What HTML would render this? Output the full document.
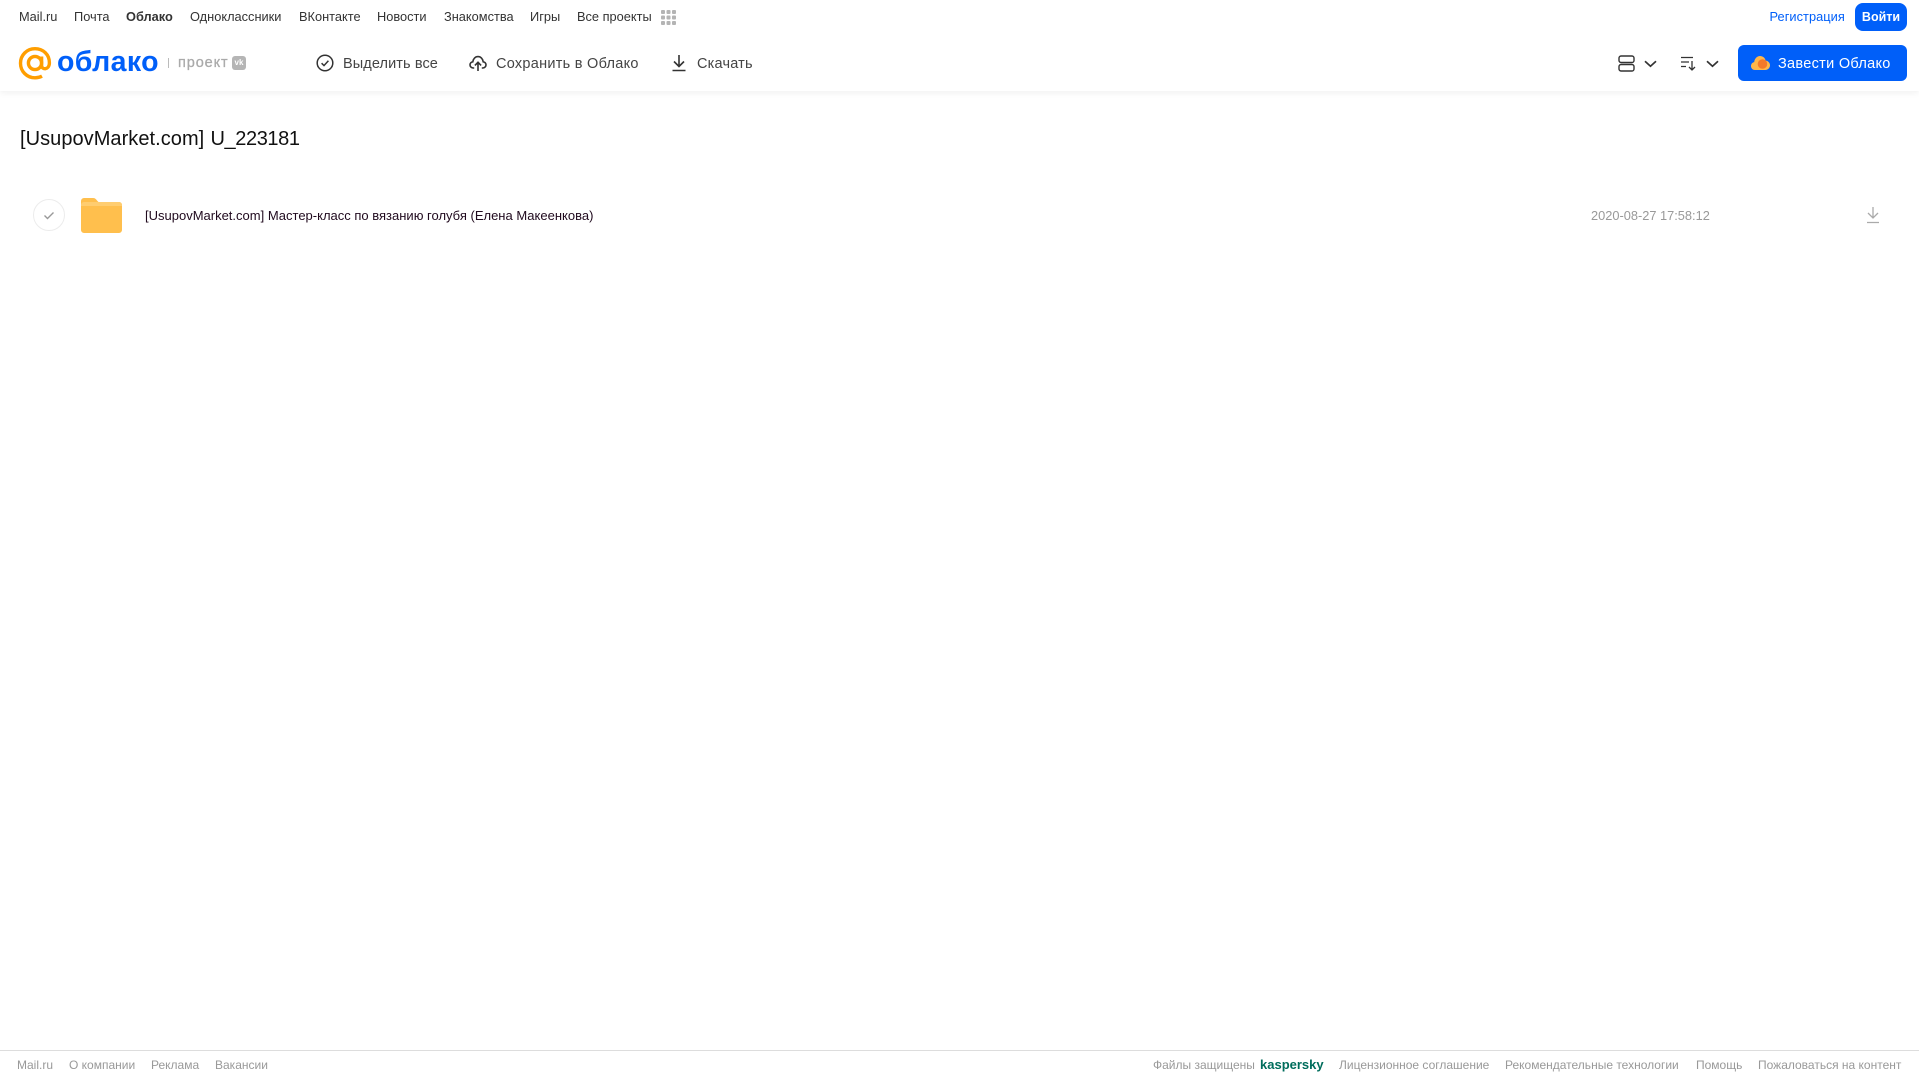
<!DOCTYPE html>
<html lang="ru"><head><meta charset="utf-8"><title>Облако</title>
<style>
html,body{margin:0;padding:0;background:#fff;width:1919px;height:1079px;overflow:hidden;font-family:"Liberation Sans",Arial,sans-serif}
.t{position:absolute;white-space:nowrap;line-height:20px;height:20px}
.n{font-size:12.8px;color:#333;top:7px}
.b{font-size:14.5px;color:#444;top:53.5px;letter-spacing:.1px}
.f{font-size:12px;color:#999;top:1055px}
svg{position:absolute;overflow:visible}
</style></head><body>
<div style="position:absolute;left:0;top:0;width:1919px;height:91px;background:#fff;box-shadow:0 2px 6px rgba(0,0,0,.06)"></div>

<span class="t n" style="left:19px">Mail.ru</span>
<span class="t n" style="left:74px">Почта</span>
<span class="t n" style="left:126px;font-weight:bold">Облако</span>
<span class="t n" style="left:190px">Одноклассники</span>
<span class="t n" style="left:299px">ВКонтакте</span>
<span class="t n" style="left:377px">Новости</span>
<span class="t n" style="left:444px">Знакомства</span>
<span class="t n" style="left:530px">Игры</span>
<span class="t n" style="left:577px">Все проекты</span>
<svg style="left:661px;top:10px" width="15" height="15" fill="#b4b4b4"><rect x="0" y="0" width="4" height="4" rx="1"/><rect x="5.500" y="0" width="4" height="4" rx="1"/><rect x="11" y="0" width="4" height="4" rx="1"/><rect x="0" y="5.500" width="4" height="4" rx="1"/><rect x="5.500" y="5.500" width="4" height="4" rx="1"/><rect x="11" y="5.500" width="4" height="4" rx="1"/><rect x="0" y="11" width="4" height="4" rx="1"/><rect x="5.500" y="11" width="4" height="4" rx="1"/><rect x="11" y="11" width="4" height="4" rx="1"/></svg>

<span class="t n" style="left:1769.500px;color:#005ff9;letter-spacing:.05px">Регистрация</span>
<div style="position:absolute;left:1855px;top:3px;width:52px;height:28px;background:#005ff9;border-radius:8px;color:#fff;font-size:12.500px;font-weight:bold;line-height:28px;text-align:center">Войти</div>

<svg style="left:19px;top:47px" width="33" height="33" viewBox="0 0 33 33" fill="none" stroke="#ff9e00" stroke-width="3.400"><circle cx="16" cy="16" r="6.600"/><path d="M22.600 9.500V18.500c0 4.600 7.600 4.600 7.800-2.500C30.500 7.500 24 1.700 16 1.700S1.500 8 1.500 16.200c0 8.300 6.500 14.600 14.500 14.600 2.700 0 5-.6 7-1.700"/></svg>
<span class="t" style="left:57px;top:42px;height:40px;line-height:40px;font-size:28.500px;font-weight:bold;color:#005ff9;letter-spacing:.4px">облако</span>
<div style="position:absolute;left:168px;top:58px;width:1px;height:10px;background:#bbb"></div>
<span class="t" style="left:178px;top:53px;font-size:14.500px;color:#aaa;letter-spacing:.9px;-webkit-text-stroke:.3px #aaa">проект</span>
<div style="position:absolute;left:232px;top:56px;width:14px;height:14px;border-radius:3px;background:#b5b5b5;color:#fff;font-size:8px;font-weight:bold;line-height:14px;text-align:center">vk</div>

<svg style="left:316px;top:54px" width="18" height="18" viewBox="0 0 18 18" fill="none" stroke="#333" stroke-width="1.500"><circle cx="9" cy="9" r="7.800"/><path d="M5.600 9.200l2.400 2.400 4.400-4.800"/></svg>
<span class="t b" style="left:343px">Выделить все</span>
<svg style="left:469px;top:54px" width="18" height="18" viewBox="0 0 18 18" fill="none" stroke="#333" stroke-width="1.600"><path d="M5.200 14H4.300C2.400 14 1 12.600 1 10.900c0-1.600 1.200-2.900 2.800-3.100C4.200 4.800 6.300 2.600 9 2.600s4.800 2.200 5.200 5.200c1.600.2 2.800 1.500 2.800 3.100 0 1.700-1.400 3.100-3.300 3.100h-.9"/><path d="M9 17V8.500M5.900 11.400 9 8.300l3.100 3.100"/></svg>
<span class="t b" style="left:496px;letter-spacing:.27px">Сохранить в Облако</span>
<svg style="left:671px;top:54px" width="16" height="18" viewBox="0 0 16 18" fill="none" stroke="#333" stroke-width="1.600"><path d="M8 1v11M3 7.500 8 12.500l5-5M1.500 16.500h13"/></svg>
<span class="t b" style="left:697px;letter-spacing:.2px">Скачать</span>

<svg style="left:1618px;top:55px" width="17" height="17" viewBox="0 0 17 17" fill="none" stroke="#333" stroke-width="1.400"><rect x="1" y="1" width="15" height="6.500" rx="2"/><rect x="1" y="9.500" width="15" height="6.500" rx="2"/></svg>
<svg style="left:1644px;top:60px" width="13" height="8" viewBox="0 0 13 8" fill="none" stroke="#333" stroke-width="1.700"><path d="M1 1.200l5.500 5 5.500-5"/></svg>
<svg style="left:1681px;top:55px" width="16" height="16" viewBox="0 0 16 16" fill="none" stroke="#333" stroke-width="1.300"><path d="M0 2.500h12M0 7h8M0 11.500h5M11 6v9M8 12l3 3 3-3"/></svg>
<svg style="left:1706px;top:60px" width="13" height="8" viewBox="0 0 13 8" fill="none" stroke="#333" stroke-width="1.700"><path d="M1 1.200l5.500 5 5.500-5"/></svg>

<div style="position:absolute;left:1738px;top:45px;width:169px;height:36px;background:#005ff9;border-radius:6px"></div>
<svg style="left:1751px;top:54px" width="19" height="17" viewBox="0 0 19 17"><path d="M4 16C1.700 16 0 14.300 0 12c0-2 1.300-3.600 3.200-3.900C3.600 4.500 6 2 9 2c2.800 0 5 1.800 5.600 4.500C17 6.800 19 8.800 19 11.300 19 13.900 16.900 16 14.300 16z" fill="#ffb74a"/><circle cx="11.500" cy="10" r="4.800" fill="#f4792b"/></svg>
<span class="t" style="left:1778px;top:53.500px;font-size:14.500px;color:#fff;letter-spacing:.3px">Завести Облако</span>

<div class="t" style="left:20px;top:123.500px;height:30px;line-height:30px;font-size:20px;color:#111;letter-spacing:.05px">[UsupovMarket.com]</div>
<div class="t" style="left:210.500px;top:123.500px;height:30px;line-height:30px;font-size:20px;color:#111;letter-spacing:-.4px">U_223181</div>

<svg style="left:33px;top:199px" width="32" height="32" viewBox="0 0 32 32" fill="none"><circle cx="16" cy="16" r="15.500" stroke="#ececec"/><path d="M11.500 16.500l3 3 6-6" stroke="#999" stroke-width="1.400"/></svg>
<svg style="left:81px;top:198px" width="41" height="35" viewBox="0 0 41 35"><path d="M0 3a3 3 0 0 1 3-3h9c2 0 3 1 4 2.500L17.500 4H38a3 3 0 0 1 3 3v25a3 3 0 0 1-3 3H3a3 3 0 0 1-3-3z" fill="#ffbf4d"/><path d="M0 7a3 3 0 0 1 3-3h35a3 3 0 0 1 3 3v1H0z" fill="#ffcd70"/></svg>
<span class="t" style="left:145px;top:206px;font-size:13px;color:#200a1e">[UsupovMarket.com] Мастер-класс по вязанию голубя (Елена Макеенкова)</span>
<span class="t" style="left:1591px;top:206px;font-size:12.800px;color:#999">2020-08-27 17:58:12</span>
<svg style="left:1866px;top:206px" width="14" height="18" viewBox="0 0 14 18" fill="none" stroke="#aaa" stroke-width="1.300"><path d="M7 1v11M2 7l5 5 5-5M1 16.500h12" /></svg>

<div style="position:absolute;left:0;top:1050px;width:1919px;height:1px;background:#ddd"></div>
<span class="t f" style="left:17px">Mail.ru</span>
<span class="t f" style="left:69px">О компании</span>
<span class="t f" style="left:151px">Реклама</span>
<span class="t f" style="left:215px">Вакансии</span>
<span class="t f" style="left:1153px">Файлы защищены</span>
<span class="t f" style="left:1260px;font-weight:bold;color:#006d5c;font-size:13px">kaspersky</span>
<span class="t f" style="left:1339px">Лицензионное соглашение</span>
<span class="t f" style="left:1505px">Рекомендательные технологии</span>
<span class="t f" style="left:1696px">Помощь</span>
<span class="t f" style="left:1758px">Пожаловаться на контент</span>
</body></html>
